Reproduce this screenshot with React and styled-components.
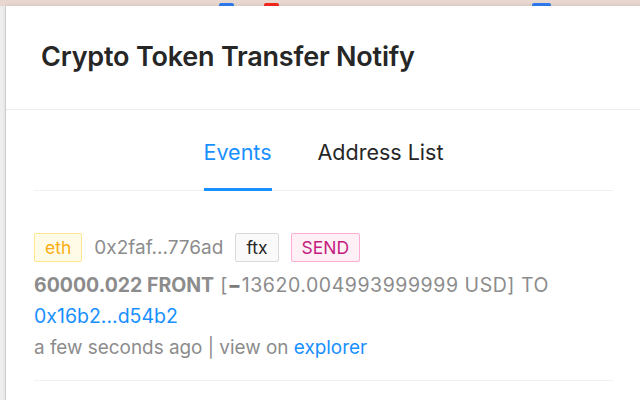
import React from 'react';
import styled, { createGlobalStyle } from 'styled-components';

const GlobalStyle = createGlobalStyle`
    body {
        margin: 0;
        overflow: hidden;
        background: #ededed;
        font-family: Inter, "Liberation Sans", sans-serif;
    }
`;

// Фон браузера за попапом
const Page = styled.div`
    width: 640px;
    height: 400px;
    display: grid;
    grid-template-columns: 6px 1fr;
    grid-template-rows: 6px 1fr;
    overflow: hidden;
`;

const TopStrip = styled.div`
    grid-column: 1 / -1;
    background: #e7d7ce;
    display: flex;
    align-items: flex-end;
`;

const Mark = styled.div`
    width: ${props => props.w}px;
    height: 3px;
    margin-left: ${props => props.left}px;
    border-radius: 2px 2px 0 0;
    background: ${props => props.color};
`;

const SideStrip = styled.div`
    background: #eeeeee;
    border-right: 1px solid #d6d6d6;
`;

const Popup = styled.div`
    width: 635px;
    background: #fff;
    box-shadow: 0 0 4px rgba(0, 0, 0, 0.12);
    display: flex;
    flex-direction: column;
`;

const Header = styled.div`
    height: 104px;
    box-sizing: border-box;
    padding: 0 35px 2px;
    display: flex;
    align-items: center;
    border-bottom: 1px solid #ededed;
`;

const Title = styled.h1`
    margin: 0;
    font-size: 27px;
    font-weight: 600;
    color: #262626;
    letter-spacing: -0.2px;
`;

const Content = styled.div`
    padding: 0 28px;
`;

const TabBar = styled.div`
    height: 81px;
    box-sizing: border-box;
    display: flex;
    justify-content: center;
    gap: 46px;
    border-bottom: 1px solid #f0f0f0;
`;

const Tab = styled.div`
    display: flex;
    align-items: flex-end;
    padding-bottom: 24px;
    font-size: 21.5px;
    line-height: 24px;
    color: ${props => props.active ? '#1890ff' : '#262626'};
    border-bottom: 3px solid ${props => props.active ? '#1890ff' : 'transparent'};
    margin-bottom: -1px;
`;

const Event = styled.div`
    padding: 42px 0 17px;
    border-bottom: 1px solid #f0f0f0;
`;

const TagRow = styled.div`
    display: flex;
    align-items: center;
    gap: 12px;
    height: 29px;
    margin-bottom: 8px;
`;

const tagColors = {
    gold: { bg: '#fffbe6', border: '#ffe58f', color: '#faad14' },
    plain: { bg: '#fafafa', border: '#d9d9d9', color: '#262626' },
    magenta: { bg: '#fff0f6', border: '#ffadd2', color: '#c41d7f' },
};

const Tag = styled.span`
    height: 29px;
    box-sizing: border-box;
    padding: 0 10px;
    display: flex;
    align-items: center;
    font-size: 17.5px;
    border-radius: 2px;
    border: 1px solid ${props => tagColors[props.kind].border};
    background: ${props => tagColors[props.kind].bg};
    color: ${props => tagColors[props.kind].color};
`;

const Address = styled.span`
    font-size: 19px;
    color: #8c8c8c;
`;

const Line = styled.div`
    font-size: ${props => props.size || 19}px;
    letter-spacing: ${props => props.spacing || 0}px;
    line-height: 31px;
    color: #8c8c8c;
    white-space: nowrap;
`;

const Strong = styled.b`
    font-weight: 700;
    letter-spacing: 0;
`;

const Minus = styled.span`
    font-weight: 800;
    color: #7a7a7a;
`;

const Link = styled.a`
    color: #1890ff;
    text-decoration: none;
`;

const event = {
    chain: 'eth',
    from: '0x2faf...776ad',
    label: 'ftx',
    type: 'SEND',
    amount: '60000.022 FRONT',
    usd: '13620.004993999999',
    to: '0x16b2...d54b2',
    time: 'a few seconds ago',
};

export default function App() {
    return (
        <Page>
            <GlobalStyle />
            <TopStrip>
                <Mark left={219} w={15} color="#2f7bf0" />
                <Mark left={30} w={15} color="#f5281c" />
                <Mark left={253} w={19} color="#2f7bf0" />
            </TopStrip>
            <SideStrip />
            <Popup>
                <Header>
                    <Title>Crypto Token Transfer Notify</Title>
                </Header>
                <Content>
                    <TabBar>
                        <Tab active>Events</Tab>
                        <Tab>Address List</Tab>
                    </TabBar>
                    <Event>
                        <TagRow>
                            <Tag kind="gold">{event.chain}</Tag>
                            <Address>{event.from}</Address>
                            <Tag kind="plain">{event.label}</Tag>
                            <Tag kind="magenta">{event.type}</Tag>
                        </TagRow>
                        <Line size={19.5} spacing={0.55}>
                            <Strong>{event.amount}</Strong> [<Minus>−</Minus>{event.usd} USD] TO
                        </Line>
                        <Line size={19.5}>
                            <Link href="#">{event.to}</Link>
                        </Line>
                        <Line size={18.9}>
                            {event.time} | view on <Link href="#">explorer</Link>
                        </Line>
                    </Event>
                </Content>
            </Popup>
        </Page>
    );
}
